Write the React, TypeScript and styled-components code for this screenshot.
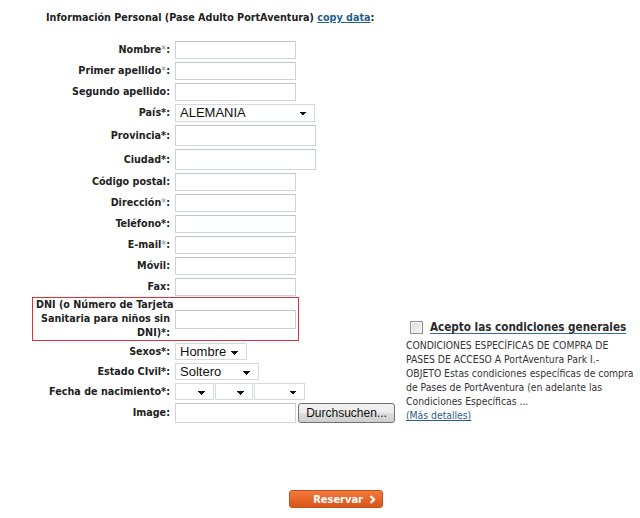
import React from "react";
import styled, { createGlobalStyle } from "styled-components";

const GlobalStyle = createGlobalStyle`
  body {
    margin: 0;
    background: #ffffff;
    font-family: "DejaVu Sans Condensed", "Liberation Sans", sans-serif;
    color: #222;
  }
`;

const Page = styled.div`
  width: 640px;
  height: 518px;
  overflow: hidden;
`;

const Title = styled.div`
  padding: 11px 0 0 46px;
  font-size: 10.7px;
  line-height: 13px;
  font-weight: 700;
  color: #222;
`;

const CopyLink = styled.a`
  color: #1f5f8f;
  text-decoration: underline;
  cursor: pointer;
`;

const Main = styled.div`
  display: flex;
  align-items: flex-end;
  margin-top: 17px;
`;

const Form = styled.div`
  width: 406px;
  box-sizing: border-box;
  padding-left: 32px;
  display: flex;
  flex-direction: column;
  gap: 3px;
`;

const Row = styled.div<{ $boxed?: boolean }>`
  display: flex;
  align-items: center;
  gap: 5px;
  ${(p) =>
    p.$boxed &&
    `
    width: 267px;
    box-sizing: border-box;
    border: 1px solid #e2313b;
    margin: -2px 0 -1px;
  `}
`;

const Label = styled.label<{ $width?: number; $pad?: number }>`
  width: ${(p) => p.$width ?? 138}px;
  padding-left: ${(p) => p.$pad ?? 0}px;
  box-sizing: border-box;
  flex-shrink: 0;
  text-align: right;
  font-size: 10.7px;
  line-height: 14px;
  font-weight: 700;
  color: #222;
  white-space: nowrap;
`;

const Star = styled.span<{ $soft?: boolean }>`
  color: ${(p) => (p.$soft ? "#8a8a8a" : "#222")};
  font-weight: ${(p) => (p.$soft ? 400 : 700)};
`;

const TextInput = styled.input<{ $w?: number; $h?: number }>`
  width: ${(p) => p.$w ?? 121}px;
  height: ${(p) => p.$h ?? 18}px;
  box-sizing: border-box;
  border: 1px solid #cfd3d8;
  border-top-color: #bfc4ca;
  background: #fff;
  margin: 0;
  padding: 0 3px;
  font: 13px "Liberation Sans", Arial, sans-serif;
`;

const Select = styled.select<{ $w: number; $h?: number }>`
  appearance: none;
  -webkit-appearance: none;
  width: ${(p) => p.$w}px;
  height: ${(p) => p.$h ?? 18}px;
  box-sizing: border-box;
  margin: 0;
  padding: 0 0 0 4px;
  border: 1px solid #d6d9de;
  background-color: #fff;
  background-image: linear-gradient(45deg, transparent 50%, #111 50%),
    linear-gradient(135deg, #111 50%, transparent 50%);
  background-size: 4px 4px, 4px 4px;
  background-position: right 11px top 7px, right 7px top 7px;
  background-repeat: no-repeat;
  font: 13px "Liberation Sans", Arial, sans-serif;
  color: #111;
  line-height: 16px;
`;

const FieldGroup = styled.div`
  display: flex;
  gap: 1px;
`;

const BrowseButton = styled.button`
  height: 20px;
  width: 97px;
  margin: 0 0 0 1px;
  padding: 0;
  border: 1px solid #707070;
  border-radius: 3px;
  background: linear-gradient(#f2f2f2 0%, #ebebeb 50%, #dddddd 51%, #cfcfcf 100%);
  font: 12px "Liberation Sans", Arial, sans-serif;
  color: #111;
`;

const Side = styled.div`
  width: 234px;
  padding-bottom: 1px;
  white-space: nowrap;
`;

const AcceptRow = styled.label`
  display: flex;
  align-items: center;
  gap: 7px;
  padding-left: 4px;
  margin-bottom: 3px;
  font-size: 11.6px;
  line-height: 15px;
  font-weight: 700;
  color: #2b2b2b;
`;

const Check = styled.span`
  width: 11px;
  height: 11px;
  border: 1px solid #8f8f8f;
  background: linear-gradient(135deg, #dcdcdc, #f7f7f7);
  box-shadow: inset 0 0 0 1px #f4f4f4;
  flex-shrink: 0;
`;

const AcceptText = styled.span`
  text-decoration: underline;
  text-decoration-color: #3a6c96;
  text-underline-offset: 2px;
`;

const Terms = styled.div`
  font-size: 10.3px;
  line-height: 14px;
  color: #333;
`;

const MoreLink = styled.a`
  color: #2a5d88;
  text-decoration: underline;
`;

const Footer = styled.div`
  display: flex;
  padding-left: 289px;
  margin-top: 67px;
`;

const Reserve = styled.button`
  width: 94px;
  height: 18px;
  border: 1px solid #c94f17;
  border-radius: 3px;
  background: linear-gradient(#f07a3e 0%, #e8662a 50%, #d95519 100%);
  color: #fff;
  font-family: "DejaVu Sans Condensed", "Liberation Sans", sans-serif;
  font-size: 11px;
  font-weight: 700;
  display: flex;
  align-items: center;
  justify-content: flex-end;
  gap: 6px;
  padding: 0 6px 0 0;
`;

type Field = {
  label: string;
  star?: "soft" | "hard";
};

const fields: Field[] = [
  { label: "Nombre", star: "soft" },
  { label: "Primer apellido", star: "soft" },
  { label: "Segundo apellido" },
];

const fields2: Field[] = [
  { label: "Código postal" },
  { label: "Dirección", star: "soft" },
  { label: "Teléfono", star: "hard" },
  { label: "E-mail", star: "soft" },
  { label: "Móvil" },
  { label: "Fax" },
];

const LabelText = ({ f }: { f: Field }) => (
  <Label>
    {f.label}
    {f.star && <Star $soft={f.star === "soft"}>*</Star>}:
  </Label>
);

const App = () => {
  return (
    <Page>
      <GlobalStyle />
      <Title>
        Información Personal (Pase Adulto PortAventura) <CopyLink>copy data</CopyLink>:
      </Title>

      <Main>
        <Form>
          {fields.map((f) => (
            <Row key={f.label}>
              <LabelText f={f} />
              <TextInput />
            </Row>
          ))}
          <Row>
            <LabelText f={{ label: "País", star: "hard" }} />
            <Select $w={140} defaultValue="ALEMANIA">
              <option>ALEMANIA</option>
            </Select>
          </Row>
          <Row>
            <LabelText f={{ label: "Provincia", star: "hard" }} />
            <TextInput $w={141} $h={21} />
          </Row>
          <Row>
            <LabelText f={{ label: "Ciudad", star: "hard" }} />
            <TextInput $w={141} $h={21} />
          </Row>
          {fields2.map((f) => (
            <Row key={f.label}>
              <LabelText f={f} />
              <TextInput />
            </Row>
          ))}
          <Row $boxed>
            <Label $width={137} $pad={3}>
              DNI (o Número de Tarjeta
              <br />
              Sanitaria para niños sin
              <br />
              DNI)<Star>*</Star>:
            </Label>
            <TextInput $h={19} />
          </Row>
          <Row>
            <LabelText f={{ label: "Sexos", star: "hard" }} />
            <Select $w={72} $h={17} defaultValue="Hombre">
              <option>Hombre</option>
            </Select>
          </Row>
          <Row>
            <LabelText f={{ label: "Estado CIvil", star: "hard" }} />
            <Select $w={84} $h={17} defaultValue="Soltero">
              <option>Soltero</option>
            </Select>
          </Row>
          <Row>
            <LabelText f={{ label: "Fecha de nacimiento", star: "hard" }} />
            <FieldGroup>
              <Select $w={39} $h={17}>
                <option></option>
              </Select>
              <Select $w={38} $h={17}>
                <option></option>
              </Select>
              <Select $w={51} $h={17}>
                <option></option>
              </Select>
            </FieldGroup>
          </Row>
          <Row>
            <LabelText f={{ label: "Image" }} />
            <FieldGroup>
              <TextInput $h={20} />
              <BrowseButton>Durchsuchen...</BrowseButton>
            </FieldGroup>
          </Row>
        </Form>

        <Side>
          <AcceptRow>
            <Check />
            <AcceptText>Acepto las condiciones generales</AcceptText>
          </AcceptRow>
          <Terms>
            CONDICIONES ESPECÍFICAS DE COMPRA DE
            <br />
            PASES DE ACCESO A PortAventura Park I.-
            <br />
            OBJETO Estas condiciones específicas de compra
            <br />
            de Pases de PortAventura (en adelante las
            <br />
            Condiciones Específicas ...
            <br />
            <MoreLink>(Más detalles)</MoreLink>
          </Terms>
        </Side>
      </Main>

      <Footer>
        <Reserve>
          Reservar
          <svg width="7" height="9" viewBox="0 0 7 9">
            <path d="M1.5 1 L5 4.5 L1.5 8" stroke="#fff" strokeWidth="2.2" fill="none" />
          </svg>
        </Reserve>
      </Footer>
    </Page>
  );
};

export default App;
